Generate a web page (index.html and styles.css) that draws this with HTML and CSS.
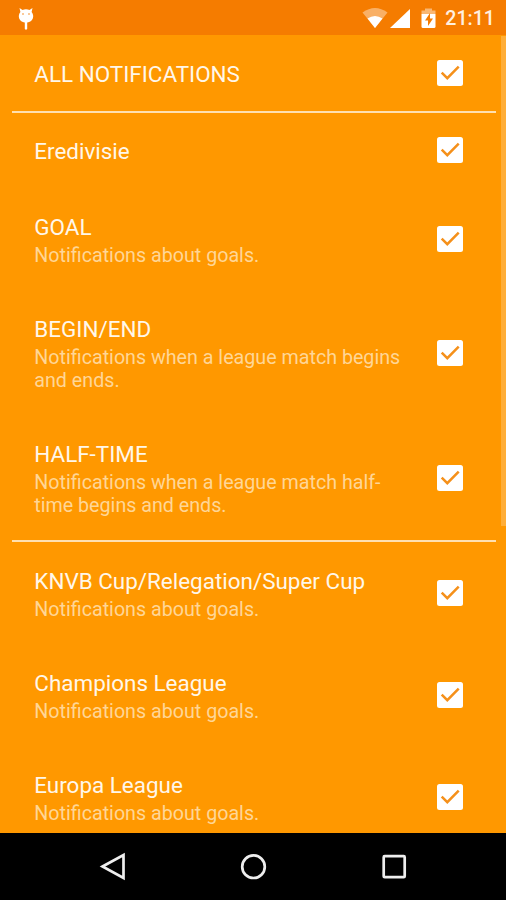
FILE: index.html
```html
<!DOCTYPE html>
<html lang="en">
<head>
<meta charset="utf-8">
<title>Notifications</title>
<link rel="stylesheet" href="styles.css">
</head>
<body>
<svg class="defs" width="0" height="0">
  <symbol id="check" viewBox="0 0 26 26">
    <rect width="26" height="26" rx="2.500" fill="#fff"/>
    <path d="M4.700 12.700 10.300 18.200 21.700 6.700" fill="none" stroke="#f5901a" stroke-width="2.500"/>
  </symbol>
</svg>
<div class="screen">
  <header class="status">
    <svg class="debug" width="18" height="24" viewBox="0 0 18 24" fill="#fff">
      <path d="M2.500 1 5.500 3Q9 1.400 12.500 3L15.500 1 14.600 5Q17 8 15.800 11.500 14.200 15.500 9 15.700 3.800 15.500 2.200 11.500 1 8 3.400 5Z"/>
      <path d="M7.800 15h2.400v7q-1.200 1.500-2.400 0Z"/>
      <circle cx="6" cy="7" r="1" fill="#f9b777"/><circle cx="12" cy="7" r="1" fill="#f9b777"/>
    </svg>
    <div class="indicators">
      <svg width="76" height="24" viewBox="0 0 76 24">
        <path d="M0.500 5.500Q13-3.500 25.500 5.500L13 21Z" fill="#fff" fill-opacity=".4"/>
        <path d="M5.500 11.500Q13 6.500 20.500 11.500L13 21Z" fill="#fff"/>
        <path d="M28 21 48 2V21Z" fill="#fff"/>
        <path d="M59.500 7V3.500H63V1.500h7v2h3.500V7Z" fill="#fff" fill-opacity=".45"/>
        <path d="M59.500 7h14v12.500q0 1.500-1.500 1.500H61q-1.500 0-1.500-1.500Z" fill="#fff"/>
        <path d="M68 6 63 13.500h3V19l5-7.500h-3Z" fill="#f57c00"/>
      </svg>
      <span class="clock">21:11</span>
    </div>
  </header>
  <main class="list">
    <div class="scrollbar"></div>
    <section class="group">
      <div class="row single first"><div class="title">ALL NOTIFICATIONS</div><svg class="box"><use href="#check"/></svg></div>
    </section>
    <section class="group">
      <div class="row single"><div class="title">Eredivisie</div><svg class="box"><use href="#check"/></svg></div>
      <div class="row"><div class="text"><div class="title">GOAL</div><div class="summary">Notifications about goals.</div></div><svg class="box"><use href="#check"/></svg></div>
      <div class="row tall"><div class="text"><div class="title">BEGIN/END</div><div class="summary">Notifications when a league match begins and ends.</div></div><svg class="box"><use href="#check"/></svg></div>
      <div class="row tall"><div class="text"><div class="title">HALF-TIME</div><div class="summary">Notifications when a league match half-time begins and ends.</div></div><svg class="box"><use href="#check"/></svg></div>
    </section>
    <section class="group">
      <div class="row"><div class="text"><div class="title">KNVB Cup/Relegation/Super Cup</div><div class="summary">Notifications about goals.</div></div><svg class="box"><use href="#check"/></svg></div>
      <div class="row"><div class="text"><div class="title">Champions League</div><div class="summary">Notifications about goals.</div></div><svg class="box"><use href="#check"/></svg></div>
      <div class="row"><div class="text"><div class="title">Europa League</div><div class="summary">Notifications about goals.</div></div><svg class="box"><use href="#check"/></svg></div>
    </section>
  </main>
  <nav class="navbar">
    <svg width="28" height="30" viewBox="0 0 28 30"><path d="M3.500 14.500 24.500 3V26Z"/></svg>
    <svg width="28" height="30" viewBox="0 0 28 30"><circle cx="14.500" cy="14.700" r="11.300"/></svg>
    <svg width="28" height="30" viewBox="0 0 28 30"><rect x="3.700" y="4.200" width="21" height="21" rx="1"/></svg>
  </nav>
</div>
</body>
</html>
```
FILE: styles.css
```css
* { box-sizing: border-box; }
body { margin: 0; font-family: Roboto, "Liberation Sans", sans-serif; background: #ff9800; }
.defs { display: none; }
.screen { display: flex; flex-direction: column; width: 506px; height: 900px; overflow: hidden; }
.status {
  flex: none; display: flex; justify-content: space-between; align-items: flex-start;
  height: 35px; padding: 7px 11px 0 17px; background: #f57c00;
}
.indicators { display: flex; gap: 7px; }
.clock { color: #fff0e0; font-size: 19.600px; font-weight: 500; line-height: 24px; }
.list { position: relative; flex: 1; min-height: 0; overflow: hidden; background: #ff9800; }
.scrollbar { position: absolute; top: 1px; right: 0; width: 5px; height: 490px; background: #ffae38; }
.group { padding: 0 10px 0 12px; }
.group + .group::before { content: ""; display: block; height: 2px; background: #ffe0b0; }
.row {
  display: grid; grid-template-columns: 377px 26px; justify-content: space-between; align-items: center;
  height: 102.200px; padding: 1px 33px 0 22.300px;
}
.row.single { height: 75px; }
.row.first { height: 76px; }
.row.tall { height: 125px; }
.text { padding-top: 1.300px; }
.title { color: #fff7ea; font-size: 22.450px; line-height: 26px; }
.summary { margin-top: 4px; color: #ffd696; font-size: 19.680px; line-height: 23px; }
.box { display: block; width: 26px; height: 26px; margin-bottom: 1.500px; }
.row.tall .box { margin-bottom: 0; }
.navbar { flex: none; display: flex; justify-content: center; gap: 112.500px; height: 67px; padding-top: 19px; background: #000; }
.navbar svg { fill: none; stroke: #eee; stroke-width: 2.700; }
```
